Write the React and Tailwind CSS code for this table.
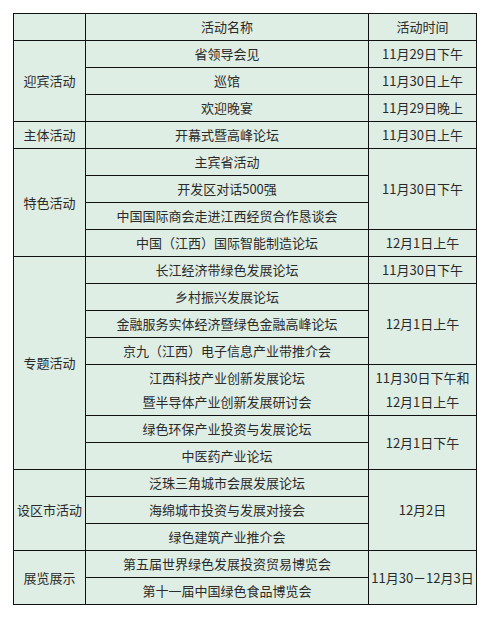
import React from "react";

const cells = [
  // header
  { c: "col-start-1 row-start-1", t: "" },
  { c: "col-start-2 row-start-1", t: "活动名称" },
  { c: "col-start-3 row-start-1", t: "活动时间" },
  // 迎宾活动
  { c: "col-start-1 row-start-2 row-span-3", t: "迎宾活动" },
  { c: "col-start-2 row-start-2", t: "省领导会见" },
  { c: "col-start-3 row-start-2", t: "11月29日下午" },
  { c: "col-start-2 row-start-3", t: "巡馆" },
  { c: "col-start-3 row-start-3", t: "11月30日上午" },
  { c: "col-start-2 row-start-4", t: "欢迎晚宴" },
  { c: "col-start-3 row-start-4", t: "11月29日晚上" },
  // 主体活动
  { c: "col-start-1 row-start-5", t: "主体活动" },
  { c: "col-start-2 row-start-5", t: "开幕式暨高峰论坛" },
  { c: "col-start-3 row-start-5", t: "11月30日上午" },
  // 特色活动
  { c: "col-start-1 row-start-6 row-span-4", t: "特色活动" },
  { c: "col-start-2 row-start-6", t: "主宾省活动" },
  { c: "col-start-3 row-start-6 row-span-3", t: "11月30日下午" },
  { c: "col-start-2 row-start-7", t: "开发区对话500强" },
  { c: "col-start-2 row-start-8", t: "中国国际商会走进江西经贸合作恳谈会" },
  { c: "col-start-2 row-start-9", t: "中国（江西）国际智能制造论坛" },
  { c: "col-start-3 row-start-9", t: "12月1日上午" },
  // 专题活动
  { c: "col-start-1 row-start-10 row-span-7", t: "专题活动" },
  { c: "col-start-2 row-start-10", t: "长江经济带绿色发展论坛" },
  { c: "col-start-3 row-start-10", t: "11月30日下午" },
  { c: "col-start-2 row-start-11", t: "乡村振兴发展论坛" },
  { c: "col-start-3 row-start-11 row-span-3", t: "12月1日上午" },
  { c: "col-start-2 row-start-12", t: "金融服务实体经济暨绿色金融高峰论坛" },
  { c: "col-start-2 row-start-13", t: "京九（江西）电子信息产业带推介会" },
  { c: "col-start-2 row-start-14", t: ["江西科技产业创新发展论坛", "暨半导体产业创新发展研讨会"] },
  { c: "col-start-3 row-start-14", t: ["11月30日下午和", "12月1日上午"] },
  { c: "col-start-2 row-start-15", t: "绿色环保产业投资与发展论坛" },
  { c: "col-start-3 row-start-15 row-span-2", t: "12月1日下午" },
  { c: "col-start-2 row-start-16", t: "中医药产业论坛" },
  // 设区市活动
  { c: "col-start-1 row-start-17 row-span-3", t: "设区市活动" },
  { c: "col-start-2 row-start-17", t: "泛珠三角城市会展发展论坛" },
  { c: "col-start-3 row-start-17 row-span-3", t: "12月2日" },
  { c: "col-start-2 row-start-18", t: "海绵城市投资与发展对接会" },
  { c: "col-start-2 row-start-19", t: "绿色建筑产业推介会" },
  // 展览展示
  { c: "col-start-1 row-start-20 row-span-2", t: "展览展示" },
  { c: "col-start-2 row-start-20", t: "第五届世界绿色发展投资贸易博览会" },
  { c: "col-start-3 row-start-20 row-span-2", t: "11月30－12月3日" },
  { c: "col-start-2 row-start-21", t: "第十一届中国绿色食品博览会" },
];

export default function App() {
  return (
    <div
      className="w-[490px] h-[621px] bg-white pt-[13px] pl-[13px]"
      style={{ fontFamily: '"Noto Sans CJK SC", "Noto Sans", sans-serif' }}
    >
      <div className="grid w-[464px] grid-cols-[72px_283px_108px] grid-rows-[repeat(13,27px)_51px_repeat(7,27px)] border-l border-t border-[#111] bg-[#dfeee4] text-[13px] text-[#2a2a2a]">
        {cells.map((cell, i) => (
          <div
            key={i}
            className={`${cell.c} flex flex-col items-center justify-center border-r border-b border-[#111] whitespace-nowrap leading-[24px]`}
          >
            {Array.isArray(cell.t)
              ? cell.t.map((line, j) => <span key={j}>{line}</span>)
              : cell.t}
          </div>
        ))}
      </div>
    </div>
  );
}
